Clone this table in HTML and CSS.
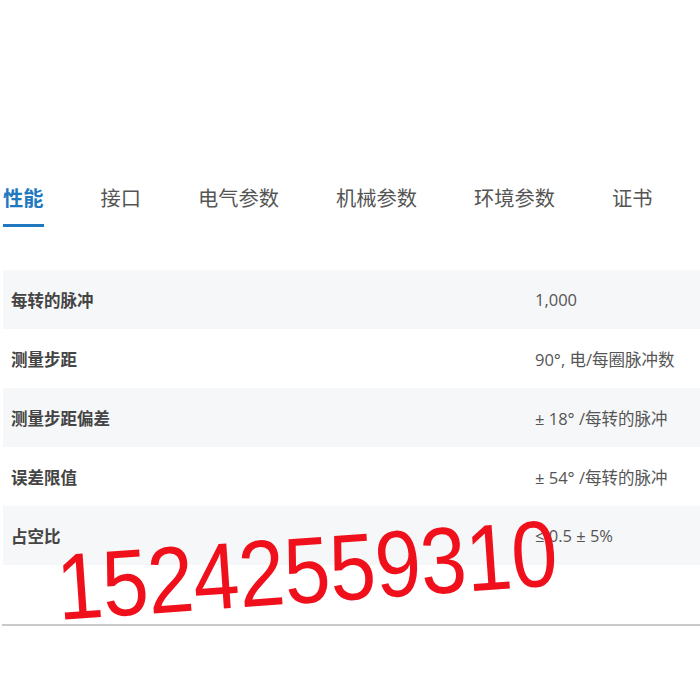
FILE: index.html
```html
<!DOCTYPE html>
<html lang="zh-CN">
<head>
<meta charset="UTF-8">
<meta name="viewport" content="width=device-width, initial-scale=1.0">
<title>性能参数</title>
<link rel="stylesheet" href="styles.css">
</head>
<body>
<div class="page">
    <div class="tabs">
        <a class="tab active" href="#">性能</a>
        <a class="tab" href="#">接口</a>
        <a class="tab" href="#">电气参数</a>
        <a class="tab" href="#">机械参数</a>
        <a class="tab" href="#">环境参数</a>
        <a class="tab" href="#">证书</a>
    </div>

    <div class="spec-table">
        <div class="spec-row">
            <div class="spec-name">每转的脉冲</div>
            <div class="spec-value">1,000</div>
        </div>
        <div class="spec-row">
            <div class="spec-name">测量步距</div>
            <div class="spec-value">90°, 电/每圈脉冲数</div>
        </div>
        <div class="spec-row">
            <div class="spec-name">测量步距偏差</div>
            <div class="spec-value">± 18° /每转的脉冲</div>
        </div>
        <div class="spec-row">
            <div class="spec-name">误差限值</div>
            <div class="spec-value">± 54° /每转的脉冲</div>
        </div>
        <div class="spec-row">
            <div class="spec-name">占空比</div>
            <div class="spec-value">≤ 0.5 ± 5%</div>
        </div>
        <!-- phone number stamped over the table -->
        <div class="watermark">15242559310</div>
    </div>

    <div class="bottom-line"></div>
</div>
</body>
</html>
```

FILE: styles.css
```css
body {
    font-family: "Open Sans", "Noto Sans CJK SC", sans-serif;
    margin: 0;
    padding: 0;
    background-color: #ffffff;
}
.page {
    padding-top: 176px;
    padding-left: 2px;
}
.tabs {
    display: flex;
    gap: 57px;
    padding-left: 1px;
}
.tab {
    font-size: 20.25px;
    line-height: 44px;
    padding-bottom: 4px;
    color: #555555;
    text-decoration: none;
    border-bottom: 3px solid transparent;
}
.tab.active {
    color: #1f78c0;
    font-weight: bold;
    border-bottom-color: #1f78c0;
}
.spec-table {
    position: relative;
    margin-top: 43px;
    margin-left: 1px;
}
.spec-row {
    display: flex;
    align-items: center;
    height: 59px;
}
.spec-row:nth-child(odd) {
    background-color: #f6f7f8;
}
.spec-name {
    width: 524px;
    padding-left: 8px;
    font-size: 16.5px;
    font-weight: bold;
    color: #444444;
}
.spec-value {
    font-size: 16.5px;
    color: #555555;
}
.watermark {
    position: absolute;
    left: 57px;
    top: 271px;
    font-family: "Liberation Sans", sans-serif;
    font-size: 94px;
    letter-spacing: -0.5px;
    line-height: 1;
    color: #f0101c;
    transform: rotate(-4deg) scaleX(0.88);
    transform-origin: left bottom;
}
.bottom-line {
    height: 2px;
    background-color: #c9c9c9;
    margin-top: 59px;
}
```
